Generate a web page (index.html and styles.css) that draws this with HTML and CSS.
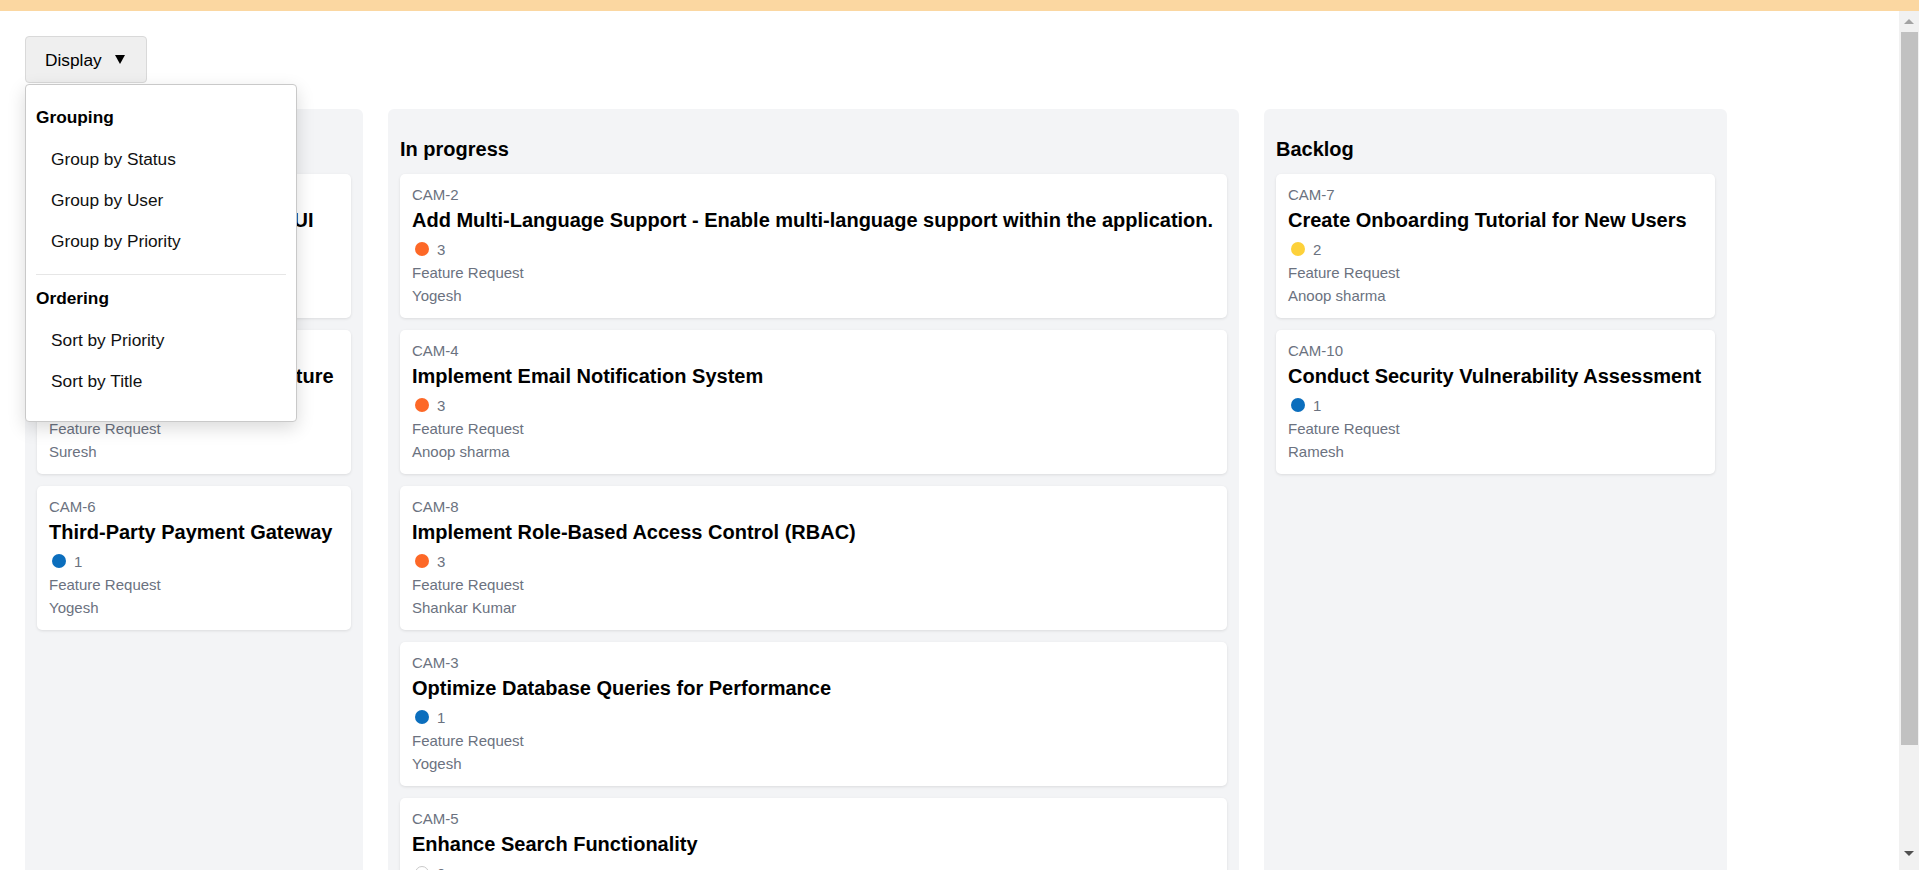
FILE: index.html
```html
<!DOCTYPE html>
<html lang="en">
<head>
<meta charset="utf-8">
<title>Kanban Board</title>
<link rel="stylesheet" href="styles.css">
</head>
<body>
<div class="topbar"></div>
<div class="viewport">
  <div class="scroller">
    <main class="app">
      <div class="toolbar">
        <button class="display-btn" type="button">Display<span class="caret"></span></button>
        <div class="menu">
          <div class="menu-heading">Grouping</div>
          <div class="menu-item">Group by Status</div>
          <div class="menu-item">Group by User</div>
          <div class="menu-item">Group by Priority</div>
          <hr class="menu-sep">
          <div class="menu-heading">Ordering</div>
          <div class="menu-item">Sort by Priority</div>
          <div class="menu-item">Sort by Title</div>
        </div>
      </div>

      <div class="board">
        <section class="column column--todo">
          <h2 class="column-title">Todo</h2>
          <div class="cards">
            <article class="card">
              <div class="card-id">CAM-1</div>
              <div class="card-title">Update User Profile Page UI</div>
              <div class="card-priority"><span class="dot dot--urgent"></span>4</div>
              <div class="card-meta">Feature Request</div>
              <div class="card-meta">Anoop sharma</div>
            </article>
            <article class="card">
              <div class="card-id">CAM-9</div>
              <div class="card-title">Upgrade Server Infrastructure</div>
              <div class="card-priority"><span class="dot dot--medium"></span>2</div>
              <div class="card-meta">Feature Request</div>
              <div class="card-meta">Suresh</div>
            </article>
            <article class="card">
              <div class="card-id">CAM-6</div>
              <div class="card-title">Third-Party Payment Gateway</div>
              <div class="card-priority"><span class="dot dot--low"></span>1</div>
              <div class="card-meta">Feature Request</div>
              <div class="card-meta">Yogesh</div>
            </article>
          </div>
        </section>

        <section class="column column--progress">
          <h2 class="column-title">In progress</h2>
          <div class="cards">
            <article class="card">
              <div class="card-id">CAM-2</div>
              <div class="card-title">Add Multi-Language Support - Enable multi-language support within the application.</div>
              <div class="card-priority"><span class="dot dot--high"></span>3</div>
              <div class="card-meta">Feature Request</div>
              <div class="card-meta">Yogesh</div>
            </article>
            <article class="card">
              <div class="card-id">CAM-4</div>
              <div class="card-title">Implement Email Notification System</div>
              <div class="card-priority"><span class="dot dot--high"></span>3</div>
              <div class="card-meta">Feature Request</div>
              <div class="card-meta">Anoop sharma</div>
            </article>
            <article class="card">
              <div class="card-id">CAM-8</div>
              <div class="card-title">Implement Role-Based Access Control (RBAC)</div>
              <div class="card-priority"><span class="dot dot--high"></span>3</div>
              <div class="card-meta">Feature Request</div>
              <div class="card-meta">Shankar Kumar</div>
            </article>
            <article class="card">
              <div class="card-id">CAM-3</div>
              <div class="card-title">Optimize Database Queries for Performance</div>
              <div class="card-priority"><span class="dot dot--low"></span>1</div>
              <div class="card-meta">Feature Request</div>
              <div class="card-meta">Yogesh</div>
            </article>
            <article class="card">
              <div class="card-id">CAM-5</div>
              <div class="card-title">Enhance Search Functionality</div>
              <div class="card-priority"><span class="dot dot--none"></span>0</div>
              <div class="card-meta">Feature Request</div>
              <div class="card-meta">Suresh</div>
            </article>
          </div>
        </section>

        <section class="column column--backlog">
          <h2 class="column-title">Backlog</h2>
          <div class="cards">
            <article class="card">
              <div class="card-id">CAM-7</div>
              <div class="card-title">Create Onboarding Tutorial for New Users</div>
              <div class="card-priority"><span class="dot dot--medium"></span>2</div>
              <div class="card-meta">Feature Request</div>
              <div class="card-meta">Anoop sharma</div>
            </article>
            <article class="card">
              <div class="card-id">CAM-10</div>
              <div class="card-title">Conduct Security Vulnerability Assessment</div>
              <div class="card-priority"><span class="dot dot--low"></span>1</div>
              <div class="card-meta">Feature Request</div>
              <div class="card-meta">Ramesh</div>
            </article>
          </div>
        </section>
      </div>
    </main>
  </div>
  <div class="scrollbar" aria-hidden="true">
    <div class="sb-up"><span class="sb-arrow-up"></span></div>
    <div class="sb-thumb"></div>
    <div class="sb-fill"></div>
    <div class="sb-down"><span class="sb-arrow-down"></span></div>
  </div>
</div>
</body>
</html>
```

FILE: styles.css
```css
html, body {
  margin: 0;
  height: 100%;
}

body {
  font-family: "Liberation Sans", Arial, sans-serif;
  color: #000;
  background: #fff;
  overflow: hidden;
  display: flex;
  flex-direction: column;
}

.topbar {
  flex: none;
  height: 11px;
  background: #fbd7a1;
}

.viewport {
  flex: 1;
  min-height: 0;
  display: flex;
}

.scroller {
  flex: 1;
  min-width: 0;
  overflow-y: auto;
  scrollbar-width: none;
}

/* scrollbar strip */
.scrollbar {
  flex: none;
  width: 20px;
  background: #f1f1f1;
  display: flex;
  flex-direction: column;
  align-items: flex-end;
}

.sb-up {
  align-self: stretch;
  height: 21px;
  display: flex;
  align-items: center;
  justify-content: center;
}

.sb-arrow-up {
  width: 0;
  height: 0;
  border-left: 5px solid transparent;
  border-right: 5px solid transparent;
  border-bottom: 5px solid #a3a3a3;
}

.sb-thumb {
  width: 17px;
  height: 713px;
  margin-right: 1px;
  background: #c1c1c1;
}

.sb-fill {
  flex: 1;
}

.sb-down {
  align-self: stretch;
  height: 26px;
  display: flex;
  justify-content: center;
  padding-top: 7px;
  box-sizing: border-box;
}

.sb-arrow-down {
  width: 0;
  height: 0;
  border-left: 5px solid transparent;
  border-right: 5px solid transparent;
  border-top: 5px solid #505050;
}

.app {
  padding: 25px;
}

.toolbar {
  position: relative;
  display: flex;
}

.display-btn {
  display: flex;
  align-items: center;
  height: 47px;
  padding: 0 21px 0 19px;
  font-family: "Liberation Sans", Arial, sans-serif;
  font-size: 17.3px;
  line-height: 20px;
  color: #000;
  background: #efefef;
  border: 1px solid #d9d9d9;
  border-radius: 4px;
}

.caret {
  width: 0;
  height: 0;
  margin-left: 13px;
  border-left: 5px solid transparent;
  border-right: 5px solid transparent;
  border-top: 9px solid #000;
}

.menu {
  position: absolute;
  top: 48px;
  left: 0;
  z-index: 10;
  box-sizing: border-box;
  width: 272px;
  padding: 22px 10px 19px;
  background: #fff;
  border: 1px solid #c9c9c9;
  border-radius: 4px;
  box-shadow: 0 6px 18px rgba(0, 0, 0, 0.15);
  font-size: 17.3px;
  line-height: 21px;
}

.menu-heading {
  font-weight: bold;
  margin-bottom: 11px;
}

.menu-item {
  padding: 10px 0 10px 15px;
  color: #111;
}

.menu-sep {
  border: 0;
  border-top: 1px solid #e6e6e6;
  margin: 12px 0 13px;
}

.board {
  display: flex;
  align-items: stretch;
  gap: 25px;
  margin-top: 26px;
}

.column {
  flex: none;
  box-sizing: border-box;
  width: max-content;
  padding: 12px;
  background: #f3f4f6;
  border-radius: 6px;
}

.column--todo {
  min-width: 338px;
}

.column--progress {
  min-width: 851px;
}

.column--backlog {
  min-width: 463px;
}

.column-title {
  margin: 16px 0 13px;
  font-size: 20px;
  line-height: 24px;
  font-weight: bold;
}

.cards {
  display: flex;
  flex-direction: column;
  gap: 12px;
}

.card {
  padding: 11px 12px 11px;
  background: #fff;
  border-radius: 5px;
  box-shadow: 0 1px 3px rgba(0, 0, 0, 0.1);
}

.card-id {
  font-size: 15px;
  line-height: 20px;
  color: #6b7280;
}

.card-title {
  margin-top: 3px;
  font-size: 20px;
  line-height: 24px;
  font-weight: bold;
  white-space: nowrap;
}

.card-priority {
  display: flex;
  align-items: center;
  height: 22px;
  margin-top: 6px;
  font-size: 15px;
  color: #6b7280;
}

.dot {
  box-sizing: border-box;
  width: 14px;
  height: 14px;
  margin: 0 8px 0 3px;
  border-radius: 50%;
}

.dot--urgent { background: #e5383b; }
.dot--high { background: #fd6827; }
.dot--medium { background: #fdd13a; }
.dot--low { background: #0b6ebd; }
.dot--none { background: #fff; border: 1px solid #c9c9c9; }

.card-meta {
  font-size: 15px;
  line-height: 22.5px;
  color: #6b7280;
}

.card-priority + .card-meta {
  margin-top: 2px;
}
```
